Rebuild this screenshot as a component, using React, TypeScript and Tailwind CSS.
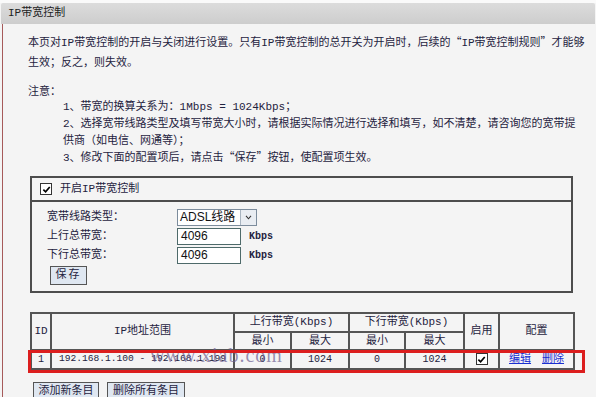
const F = "font-['Liberation_Mono','Noto_Sans_CJK_SC',monospace]"
const SANS = "font-['Liberation_Sans','Noto_Sans_CJK_SC',sans-serif]"
const Q = "font-['Noto_Sans_CJK_SC',sans-serif] leading-none"

function Check() {
  return (
    <span className="inline-flex h-[12px] w-[12px] items-center justify-center border border-[#333] bg-white">
      <svg viewBox="0 0 10 10" className="h-[9px] w-[9px]">
        <path d="M1.5 5.2 L4 7.6 L8.6 2.2" stroke="#000" strokeWidth="1.9" fill="none" />
      </svg>
    </span>
  )
}

export default function App() {
  const cell = 'border-2 border-[#555] text-center p-0 font-normal'
  return (
    <div className={`relative h-[397px] w-[596px] overflow-hidden bg-[#f4f4f4] text-[11px] text-[#1f2340] ${F}`}>
      <div className="h-[3px] bg-[#fafafa]" />
      {/* Title bar */}
      <div className="mx-[1px] flex h-[21px] items-center rounded-t-[2px] bg-gradient-to-b from-[#dcdcdc] to-[#cdcdcd] pl-[7px] text-[11px] text-[#222]">
        IP带宽控制
      </div>

      <div className="ml-[2px] border-l border-[#a65a5a] pl-[25px]">
        {/* intro text */}
        <div className="pt-[9px] leading-[20px]">
          <p>
            本页对IP带宽控制的开启与关闭进行设置。只有IP带宽控制的总开关为开启时，后续的<span className={Q}>“</span>IP带宽控制规则<span className={Q}>”</span>才能够
          </p>
          <p>生效；反之，则失效。</p>
          <p className="mt-[9px]">注意：</p>
        </div>
        <div className="-mt-[3px] pl-[35px] leading-[17px]">
          <p>1、带宽的换算关系为：1Mbps = 1024Kbps；</p>
          <p>2、选择宽带线路类型及填写带宽大小时，请根据实际情况进行选择和填写，如不清楚，请咨询您的宽带提</p>
          <p>供商（如电信、网通等）；</p>
          <p>
            3、修改下面的配置项后，请点击<span className={Q}>“</span>保存<span className={Q}>”</span>按钮，使配置项生效。
          </p>
        </div>

        {/* Settings box */}
        <div className="ml-[2px] mt-[9px] w-[543px] border-2 border-[#4d4d4d]">
          <div className="flex h-[24px] items-center gap-[8px] border-b-2 border-[#4d4d4d] pl-[8px]">
            <Check />
            <span>开启IP带宽控制</span>
          </div>
          <div className="flex flex-col pb-[6px] pl-[15px] pt-[6px]">
            <div className="flex h-[19px] items-center">
              <span className="w-[130px]">宽带线路类型：</span>
              <div className="flex h-[17px] w-[80px] border border-[#7c8c9c] bg-white">
                <span className={`flex-1 pl-[2px] text-[12px] leading-[15px] text-[#111] ${SANS}`}>ADSL线路</span>
                <span className="flex w-[16px] items-center justify-center border-l border-[#a8b4c0] bg-[#e9edf2]">
                  <svg viewBox="0 0 8 6" className="h-[5px] w-[7px]">
                    <path d="M1 1 L4 4.5 L7 1" stroke="#333" strokeWidth="1.3" fill="none" />
                  </svg>
                </span>
              </div>
            </div>
            {['上行总带宽：', '下行总带宽：'].map((l) => (
              <div key={l} className="flex h-[19px] items-center">
                <span className="w-[130px]">{l}</span>
                <div className={`h-[17px] w-[64px] border border-[#4e6a6a] bg-white pl-[3px] text-[12px] leading-[15px] text-[#111] ${SANS}`}>
                  4096
                </div>
                <span className="ml-[8px] text-[10px] font-bold">Kbps</span>
              </div>
            ))}
            <div className="mt-[1px] flex">
              <button className="ml-[3px] h-[19px] w-[37px] border border-[#555] bg-[#dfe7f1] text-[11px] tracking-[2px] text-[#1f2340]">
                保存
              </button>
            </div>
          </div>
        </div>

        {/* Rules table */}
        <table className="ml-[2px] mt-[19px] w-[543px] table-fixed border-collapse">
          <colgroup>
            <col className="w-[20px]" />
            <col className="w-[183px]" />
            <col className="w-[57px]" />
            <col className="w-[58px]" />
            <col className="w-[56px]" />
            <col className="w-[59px]" />
            <col className="w-[35px]" />
            <col className="w-[75px]" />
          </colgroup>
          <thead>
            <tr className="h-[18px]">
              <th rowSpan={2} className={cell}>ID</th>
              <th rowSpan={2} className={cell}>IP地址范围</th>
              <th colSpan={2} className={cell}>上行带宽(Kbps)</th>
              <th colSpan={2} className={cell}>下行带宽(Kbps)</th>
              <th rowSpan={2} className={cell}>启用</th>
              <th rowSpan={2} className={cell}>配置</th>
            </tr>
            <tr className="h-[18px]">
              <th className={cell}>最小</th>
              <th className={cell}>最大</th>
              <th className={cell}>最小</th>
              <th className={cell}>最大</th>
            </tr>
          </thead>
          <tbody>
            <tr className="h-[19px]">
              <td className={`${cell} text-[10px]`}>1</td>
              <td className={`${cell} text-[9.6px]`}>192.168.1.100 - 192.168.1.199</td>
              <td className={`${cell} text-[10px]`}>0</td>
              <td className={`${cell} text-[10px]`}>1024</td>
              <td className={`${cell} text-[10px]`}>0</td>
              <td className={`${cell} text-[10px]`}>1024</td>
              <td className={cell}>
                <span className="inline-flex align-middle"><Check /></span>
              </td>
              <td className={`${cell} text-[11px]`}>
                <span className="text-[#1a2fd0] underline">编辑</span>
                <span className="ml-[11px] text-[#1a2fd0] underline">删除</span>
              </td>
            </tr>
          </tbody>
        </table>

        <div className="ml-[5px] mt-[12px] flex gap-[8px]">
          <button className="h-[18px] w-[66px] border border-[#555] bg-[#dfe7f1] text-[11px] text-[#1f2340]">添加新条目</button>
          <button className="h-[18px] w-[78px] border border-[#555] bg-[#dfe7f1] text-[11px] text-[#1f2340]">删除所有条目</button>
        </div>
      </div>

      {/* watermark */}
      <span className="pointer-events-none absolute left-[150px] top-[340px] font-['Liberation_Serif',serif] text-[20px] tracking-[1px] text-[#6d5f92]/70">
        www.xiab.com
      </span>
      {/* red highlight */}
      <div className="pointer-events-none absolute left-[28px] top-[350px] h-[23px] w-[557px] border-[3px] border-[#dc1e1e]" />
    </div>
  )
}
